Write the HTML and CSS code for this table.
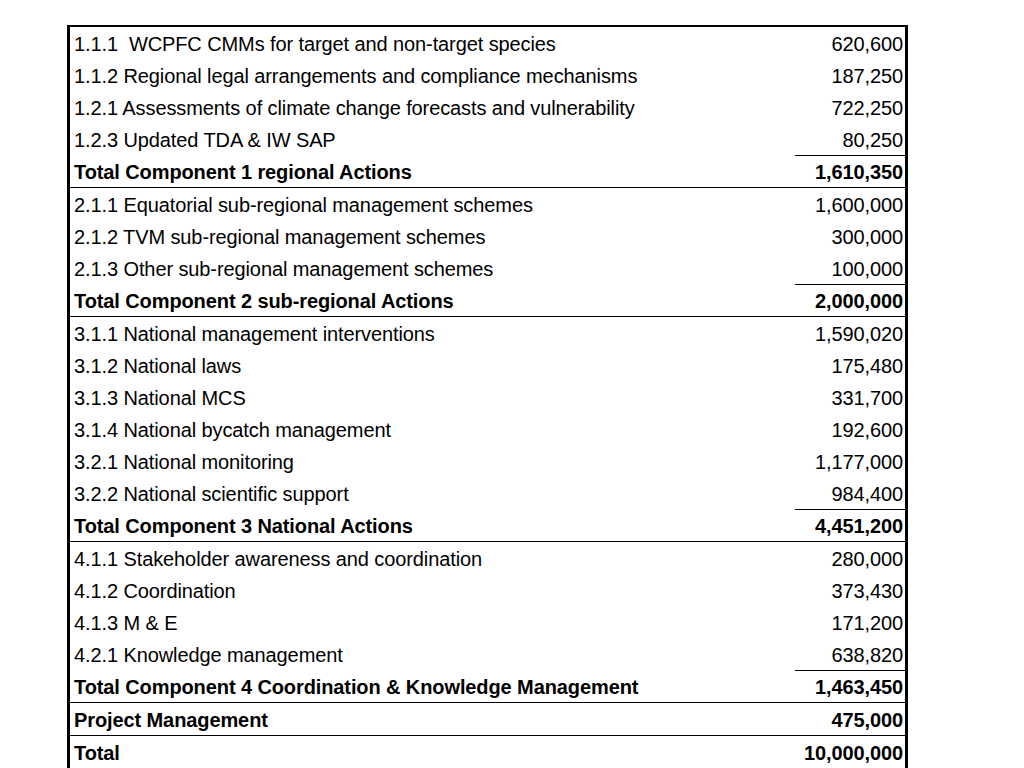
FILE: index.html
```html
<!DOCTYPE html>
<html>
<head>
<meta charset="utf-8">
<link rel="stylesheet" href="styles.css">
</head>
<body>
<div class="sheet">
  <div class="row"><div class="label">1.1.1&nbsp; WCPFC CMMs for target and non-target species</div><div class="value">620,600</div></div>
  <div class="row"><div class="label">1.1.2 Regional legal arrangements and compliance mechanisms</div><div class="value">187,250</div></div>
  <div class="row"><div class="label">1.2.1 Assessments of climate change forecasts and vulnerability</div><div class="value">722,250</div></div>
  <div class="row"><div class="label">1.2.3 Updated TDA &amp; IW SAP</div><div class="value">80,250</div></div>
  <div class="row total sub"><div class="label">Total Component 1 regional Actions</div><div class="value">1,610,350</div></div>
  <div class="row"><div class="label">2.1.1 Equatorial sub-regional management schemes</div><div class="value">1,600,000</div></div>
  <div class="row"><div class="label">2.1.2 TVM sub-regional management schemes</div><div class="value">300,000</div></div>
  <div class="row"><div class="label">2.1.3 Other sub-regional management schemes</div><div class="value">100,000</div></div>
  <div class="row total sub"><div class="label">Total Component 2 sub-regional Actions</div><div class="value">2,000,000</div></div>
  <div class="row"><div class="label">3.1.1 National management interventions</div><div class="value">1,590,020</div></div>
  <div class="row"><div class="label">3.1.2 National laws</div><div class="value">175,480</div></div>
  <div class="row"><div class="label">3.1.3 National MCS</div><div class="value">331,700</div></div>
  <div class="row"><div class="label">3.1.4 National bycatch management</div><div class="value">192,600</div></div>
  <div class="row"><div class="label">3.2.1 National monitoring</div><div class="value">1,177,000</div></div>
  <div class="row"><div class="label">3.2.2 National scientific support</div><div class="value">984,400</div></div>
  <div class="row total sub"><div class="label">Total Component 3 National Actions</div><div class="value">4,451,200</div></div>
  <div class="row"><div class="label">4.1.1 Stakeholder awareness and coordination</div><div class="value">280,000</div></div>
  <div class="row"><div class="label">4.1.2 Coordination</div><div class="value">373,430</div></div>
  <div class="row"><div class="label">4.1.3 M &amp; E</div><div class="value">171,200</div></div>
  <div class="row"><div class="label">4.2.1 Knowledge management</div><div class="value">638,820</div></div>
  <div class="row total sub"><div class="label">Total Component 4 Coordination &amp; Knowledge Management</div><div class="value">1,463,450</div></div>
  <div class="row total"><div class="label">Project Management</div><div class="value">475,000</div></div>
  <div class="row bold last"><div class="label">Total</div><div class="value">10,000,000</div></div>
</div>
</body>
</html>
```

FILE: styles.css
```css
html, body {
  margin: 0;
  padding: 0;
  background: #ffffff;
}

body {
  font-family: "Liberation Sans", Arial, sans-serif;
  font-size: 20px;
  letter-spacing: -0.1px;
  color: #000000;
}

.sheet {
  margin: 25px 0 0 67px;
  width: 841px;
  border-top: 2px solid #000;
  border-left: 3px solid #000;
  border-right: 3px solid #000;
  border-bottom: 2px solid #000;
  box-sizing: border-box;
}

.row {
  display: flex;
  height: 32px;
  line-height: 34px;
  box-sizing: border-box;
}

.row.total {
  height: 33px;
  border-bottom: 1px solid #000;
  font-weight: bold;
}

.row.bold {
  font-weight: bold;
}

.label {
  flex: 1;
  padding-left: 4px;
  white-space: nowrap;
}

.value {
  width: 110px;
  padding-right: 2px;
  text-align: right;
  box-sizing: border-box;
  white-space: nowrap;
}

.row.sub .value {
  border-top: 1px solid #000;
  line-height: 33px;
}
```
